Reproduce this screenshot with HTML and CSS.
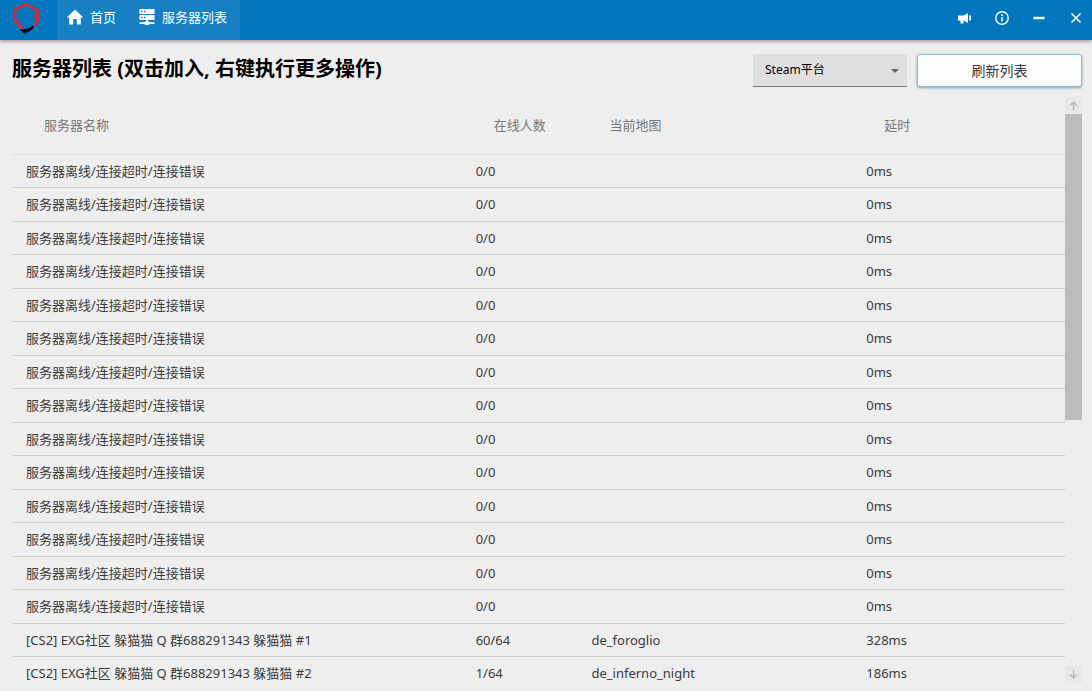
FILE: index.html
```html
<!DOCTYPE html>
<html lang="zh-CN">
<head>
<meta charset="utf-8">
<title>服务器列表</title>
<link rel="stylesheet" href="styles.css">
</head>
<body>
<header class="titlebar">
  <svg class="logo" viewBox="0 0 32 36" aria-hidden="true">
    <path d="M16 4 27.500 10.500V21L24.500 26M16 4 4.500 10V20.500L12.500 29" fill="none" stroke="#d8283c" stroke-width="2.800"/>
    <path d="M14 3.500 20 7.500M7.500 11.500v8l3 4.500M25 12.500v7" fill="none" stroke="#b03a5c" stroke-width="1.400"/>
    <path d="M9.500 29.500c5 .5 9-.5 14-4.500v3.500L15 34z" fill="#05070c"/>
  </svg>
  <nav class="nav">
    <a class="nav-link" href="#home">
      <svg class="nav-icon" viewBox="0 0 18 18" aria-hidden="true"><path d="M9 1.500.8 9.600h2.400V16.500H7.200V11h3.600v5.500h4V9.600h2.400z" fill="#fff"/></svg>
      <span>首页</span>
    </a>
    <a class="nav-link" href="#servers">
      <svg class="nav-icon" viewBox="0 0 18 18" aria-hidden="true"><path fill="#fff" fill-rule="evenodd" d="M1.500 1h15v5h-15zM3 2.800v1.400h1.500V2.800zM6 2.800v1.400h1.500V2.800zM1.500 7h15v5h-15zM3 8.800v1.400h1.500V8.800zM6 8.800v1.400h1.500V8.800zM8.200 12h1.600v1.500h1.400v.8h5.300v1.600h-5.300v1H6.800v-1H1.500v-1.600h5.300v-.8h1.400z"/></svg>
      <span>服务器列表</span>
    </a>
  </nav>
  <div class="window-tools">
    <button class="tool" type="button" aria-label="公告"><svg viewBox="0 0 16 16"><path d="M1 5.500h5.500L11 3v10l-4.500-2.500v3h-3v-3H1z" fill="#fff"/><path d="M12.500 5.500q1.800 2.500 0 5" fill="none" stroke="#fff" stroke-width="1.500"/></svg></button>
    <button class="tool" type="button" aria-label="关于"><svg viewBox="0 0 16 16"><circle cx="8" cy="8" r="6.200" fill="none" stroke="#fff" stroke-width="1.400"/><path d="M8 7v4.500M8 4.300v1.600" stroke="#fff" stroke-width="1.500"/></svg></button>
    <button class="tool" type="button" aria-label="最小化"><svg viewBox="0 0 16 16"><path d="M2.500 8h11" stroke="#fff" stroke-width="2.500"/></svg></button>
    <button class="tool" type="button" aria-label="关闭"><svg viewBox="0 0 16 16"><path d="m3.500 3.500 9 9m0-9-9 9" stroke="#fff" stroke-width="1.600"/></svg></button>
  </div>
</header>
<main class="page">
  <div class="toolbar">
    <h1 class="title">服务器列表 (双击加入, 右键执行更多操作)</h1>
    <div class="platform">
      <select class="platform-select" aria-label="平台"><option>Steam平台</option></select>
      <span class="platform-caret"></span>
    </div>
    <button class="refresh" type="button">刷新列表</button>
  </div>
  <div class="list">
    <div class="table-wrap">
      <table class="servers">
        <colgroup><col class="col-name"><col class="col-players"><col class="col-map"><col></colgroup>
        <thead><tr><th>服务器名称</th><th>在线人数</th><th>当前地图</th><th>延时</th></tr></thead>
        <tbody>
          <tr><td>服务器离线/连接超时/连接错误</td><td>0/0</td><td></td><td>0ms</td></tr>
          <tr><td>服务器离线/连接超时/连接错误</td><td>0/0</td><td></td><td>0ms</td></tr>
          <tr><td>服务器离线/连接超时/连接错误</td><td>0/0</td><td></td><td>0ms</td></tr>
          <tr><td>服务器离线/连接超时/连接错误</td><td>0/0</td><td></td><td>0ms</td></tr>
          <tr><td>服务器离线/连接超时/连接错误</td><td>0/0</td><td></td><td>0ms</td></tr>
          <tr><td>服务器离线/连接超时/连接错误</td><td>0/0</td><td></td><td>0ms</td></tr>
          <tr><td>服务器离线/连接超时/连接错误</td><td>0/0</td><td></td><td>0ms</td></tr>
          <tr><td>服务器离线/连接超时/连接错误</td><td>0/0</td><td></td><td>0ms</td></tr>
          <tr><td>服务器离线/连接超时/连接错误</td><td>0/0</td><td></td><td>0ms</td></tr>
          <tr><td>服务器离线/连接超时/连接错误</td><td>0/0</td><td></td><td>0ms</td></tr>
          <tr><td>服务器离线/连接超时/连接错误</td><td>0/0</td><td></td><td>0ms</td></tr>
          <tr><td>服务器离线/连接超时/连接错误</td><td>0/0</td><td></td><td>0ms</td></tr>
          <tr><td>服务器离线/连接超时/连接错误</td><td>0/0</td><td></td><td>0ms</td></tr>
          <tr><td>服务器离线/连接超时/连接错误</td><td>0/0</td><td></td><td>0ms</td></tr>
          <tr><td>[CS2] EXG社区 躲猫猫 Q 群688291343 躲猫猫 #1</td><td>60/64</td><td>de_foroglio</td><td>328ms</td></tr>
          <tr><td>[CS2] EXG社区 躲猫猫 Q 群688291343 躲猫猫 #2</td><td>1/64</td><td>de_inferno_night</td><td>186ms</td></tr>
        </tbody>
      </table>
    </div>
    <div class="scrollbar">
      <button class="scroll-button" type="button" aria-label="向上滚动"><svg viewBox="0 0 17 17"><path d="M8.500 13V5M5 8.500 8.500 5 12 8.500" fill="none" stroke="#b8b8b8" stroke-width="1.400"/></svg></button>
      <div class="scroll-track"><div class="scroll-thumb"></div></div>
      <button class="scroll-button" type="button" aria-label="向下滚动"><svg viewBox="0 0 17 17"><path d="M8.500 4v8M5 8.500 8.500 12 12 8.500" fill="none" stroke="#b8b8b8" stroke-width="1.400"/></svg></button>
    </div>
  </div>
</main>
</body>
</html>
```
FILE: styles.css
```css
* {
  box-sizing: border-box;
}

body {
  display: flex;
  flex-direction: column;
  height: 100vh;
  margin: 0;
  overflow: hidden;
  background: #eeeeee;
  color: #3a3a3a;
  font-family: "Noto Sans", "Noto Sans CJK SC", sans-serif;
  font-size: 13px;
  line-height: 18px;
}

button,
select {
  padding: 0;
  border: 0;
  font: inherit;
}

svg {
  display: block;
}

.titlebar {
  display: flex;
  flex: none;
  height: 40px;
  background: #0077bd;
  box-shadow: 0 1px 4px rgba(60, 20, 50, 0.5);
}

.logo {
  width: 32px;
  height: 36px;
  margin: 0 15px 0 10px;
}

.nav {
  display: flex;
}

.nav-link {
  display: flex;
  gap: 6px;
  padding: 8px 13px 0 9px;
  background: #1680c2;
  color: #ffffff;
  text-decoration: none;
}

.nav-icon {
  width: 18px;
  height: 18px;
}

.window-tools {
  display: flex;
  gap: 21px;
  margin-left: auto;
  padding: 10px 8px 0 0;
}

.tool {
  width: 16px;
  height: 16px;
  background: none;
}

.page {
  display: flex;
  flex: 1;
  flex-direction: column;
  min-height: 0;
  padding: 14px 10px 8px 12px;
}

.toolbar {
  display: flex;
  gap: 10px;
  padding-bottom: 10px;
}

.title {
  flex: 1;
  margin: 0;
  color: #000000;
  font-size: 20px;
  line-height: 30px;
}

.platform {
  position: relative;
  width: 154px;
}

.platform-select {
  width: 100%;
  height: 33px;
  padding: 0 28px 0 12px;
  border-bottom: 1px solid #777777;
  border-radius: 0;
  background: #dfdfdf;
  color: #000000;
  font-size: 12px;
  appearance: none;
}

.platform-caret {
  position: absolute;
  top: 15px;
  right: 8px;
  border: 4px solid transparent;
  border-top-color: #666666;
  border-bottom: 0;
  pointer-events: none;
}

.refresh {
  width: 165px;
  height: 33px;
  border: 1px solid #8fbad6;
  border-radius: 3px;
  background: #fcfcfc;
  box-shadow: 0 1px 3px rgba(40, 120, 170, 0.6);
  color: #3a3a3a;
  font-size: 14px;
}

.list {
  display: flex;
  flex: 1;
  min-height: 0;
}

.table-wrap {
  flex: 1;
  overflow: hidden;
}

.servers {
  width: 100%;
  border-spacing: 0;
  table-layout: fixed;
}

.col-name {
  width: 42.7%;
}

.col-players {
  width: 11%;
}

.col-map {
  width: 26.1%;
}

th,
td {
  padding: 0 0 1px 14px;
  text-align: left;
  white-space: nowrap;
}

th {
  height: 58px;
  padding: 0 0 2px 32px;
  border-bottom: 1px solid #e0e0e0;
  color: #777777;
  font-weight: 400;
}

td {
  height: 33px;
  border-bottom: 1px solid #cccccc;
}

tr:nth-child(even) td {
  height: 34px;
}

.scrollbar {
  display: flex;
  flex-direction: column;
  width: 17px;
}

.scroll-button {
  width: 17px;
  height: 17px;
  background: #e8e8e8;
}

.scroll-track {
  flex: 1;
}

.scroll-thumb {
  height: 55.5%;
  background: #bcbcbc;
}
```
